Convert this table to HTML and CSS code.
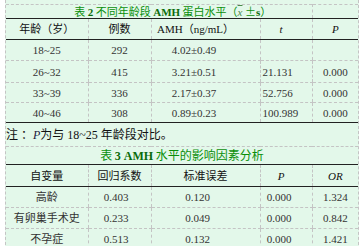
FILE: index.html
```html
<!DOCTYPE html>
<html lang="zh-CN">
<head>
<meta charset="utf-8">
<link rel="stylesheet" href="styles.css">
</head>
<body>
<div class="sheet">
<table class="tbl">
<colgroup><col class="c1"><col class="c2"><col class="c3"><col class="c4"><col class="c5"></colgroup>
<tr class="r-title2">
<td colspan="4" class="title t2">表 <b>2</b> 不同年龄段 <b>AMH</b> 蛋白水平（<i class="xbar">x</i> ±<b>s</b>）</td>
<td class="title-empty"></td>
</tr>
<tr class="head-row r-h2">
<td>年龄（岁）</td><td>例数</td><td class="h-amh">AMH（ng/mL）</td><td class="h-t"><i>t</i></td><td><i>P</i></td>
</tr>
<tr class="data-row r21"><td>18~25</td><td>292</td><td class="d-amh">4.02±0.49</td><td class="d-t"></td><td></td></tr>
<tr class="data-row r22"><td>26~32</td><td>415</td><td class="d-amh">3.21±0.51</td><td class="d-t">21.131</td><td>0.000</td></tr>
<tr class="data-row r20"><td>33~39</td><td>336</td><td class="d-amh">2.17±0.37</td><td class="d-t">52.756</td><td>0.000</td></tr>
<tr class="data-row r20 last"><td>40~46</td><td>308</td><td class="d-amh">0.89±0.23</td><td class="d-t">100.989</td><td>0.000</td></tr>
<tr class="note-row"><td colspan="5" class="note">注 ：<i>P</i>为与 18~25 年龄段对比。</td></tr>
<tr class="r-title3"><td colspan="5" class="title t3">表 <b>3 AMH</b> 水平的影响因素分析</td></tr>
<tr class="head-row r-h3">
<td>自变量</td><td class="h-coef">回归系数</td><td>标准误差</td><td class="h-p3"><i>P</i></td><td><i>OR</i></td>
</tr>
<tr class="data-row r21"><td>高龄</td><td class="d-coef">0.403</td><td class="d-se">0.120</td><td class="d-p3">0.000</td><td>1.324</td></tr>
<tr class="data-row r21"><td>有卵巢手术史</td><td class="d-coef">0.233</td><td class="d-se">0.049</td><td class="d-p3">0.000</td><td>0.842</td></tr>
<tr class="data-row r21"><td>不孕症</td><td class="d-coef">0.513</td><td class="d-se">0.132</td><td class="d-p3">0.000</td><td>1.421</td></tr>
</table>
</div>
</body>
</html>
```
FILE: styles.css
```css
html, body {
  margin: 0;
  padding: 0;
  background: #ffffff;
}
body {
  font-family: "Liberation Serif", "Noto Sans CJK SC", serif;
  font-size: 11px;
  color: #333;
}
.sheet {
  margin-left: 5px;
  width: 352px;
  padding-top: 4px;
  background: #e3f8ea;
  border-left: 1px dashed #c4c4c4;
  border-right: 1px dashed #c4c4c4;
}
.tbl {
  width: 352px;
  border-collapse: collapse;
  table-layout: fixed;
  border-top: 1px dashed #c4c4c4;
}
.c1 { width: 82px; }
.c2 { width: 63px; }
.c3 { width: 109px; }
.c4 { width: 52px; }
.c5 { width: 46px; }
.tbl td {
  padding: 0;
  height: 10px;
  line-height: 12px;
  text-align: center;
  vertical-align: middle;
  border-left: 1px dashed #c4c4c4;
  border-bottom: 1px dashed #c4c4c4;
  white-space: nowrap;
}
.tbl tr td:first-child { border-left: none; }

.r-title2 { height: 14px; }
.r-h2 { height: 21px; }
.r20 { height: 20px; }
.r21 { height: 21px; }
.r22 { height: 22px; }
.note-row { height: 24px; }
.r-title3 { height: 18px; }
.r-h3 { height: 22px; }

.title {
  font-family: "Noto Sans CJK SC", "Liberation Serif", sans-serif;
  color: #0a8f0a;
}
.title.t2 {
  font-size: 11px;
  padding-left: 28px;
}
.title.t3 {
  font-size: 12px;
}
.title b {
  font-family: "Liberation Serif", serif;
  font-weight: bold;
  color: #0b6b0b;
}
.xbar {
  font-family: "Liberation Serif", serif;
  text-decoration: overline;
  color: #4a8a4a;
}
.r-title2 td, .r-title3 td { border-bottom: 1px solid #222; }
.head-row td {
  color: #111;
  border-bottom: 1px solid #222;
}
.head-row i { font-style: italic; }
.data-row.last td { border-bottom: 1px solid #222; }
.note-row td {
  text-align: left;
  color: #111;
  padding-left: 0;
  font-size: 12px;
}
.note i { color: #1a1a40; }
.h-amh { padding-right: 20px !important; }
.d-amh { padding-right: 23px !important; }
.d-t { text-align: left !important; padding-left: 2px !important; }
.h-t { padding-right: 10px !important; }
.d-coef { padding-right: 7px !important; }
.d-se { padding-right: 16px !important; }
.d-p3 { padding-right: 14px !important; }
.h-p3 { padding-right: 10px !important; }
```
